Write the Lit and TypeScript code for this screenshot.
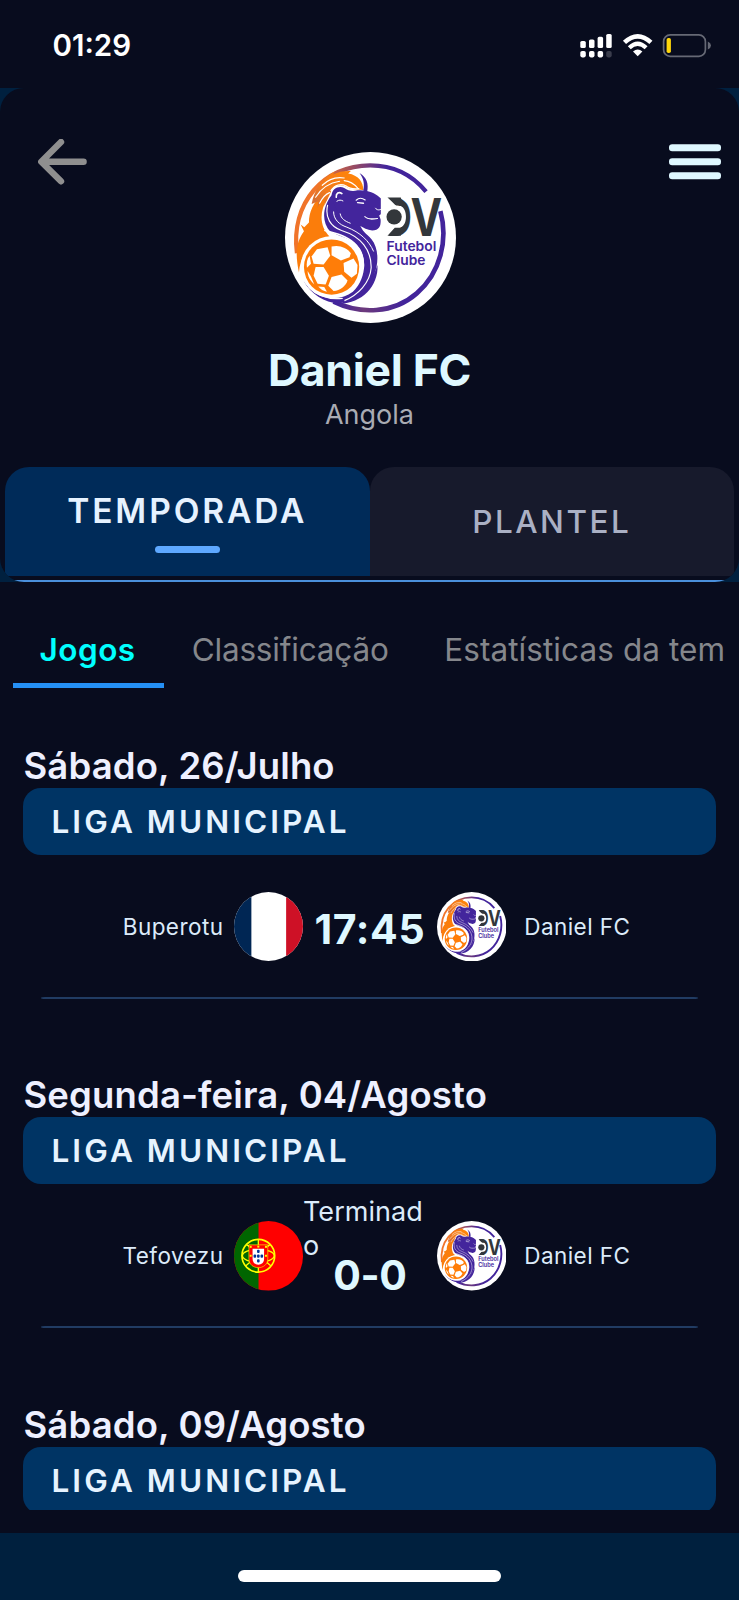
import { LitElement, html, svg, css, nothing } from "lit";
import { customElement, property } from "lit/decorators.js";

type Side = { name: string; crest: "fr" | "pt" | "club" };
type Match = { date: string; league: string; home?: Side; away?: Side; status?: string; score?: string };

const MATCHES: Match[] = [
  {
    date: "Sábado, 26/Julho",
    league: "LIGA MUNICIPAL",
    home: { name: "Buperotu", crest: "fr" },
    away: { name: "Daniel FC", crest: "club" },
    score: "17:45",
  },
  {
    date: "Segunda-feira, 04/Agosto",
    league: "LIGA MUNICIPAL",
    home: { name: "Tefovezu", crest: "pt" },
    away: { name: "Daniel FC", crest: "club" },
    status: "Terminado",
    score: "0-0",
  },
  { date: "Sábado, 09/Agosto", league: "LIGA MUNICIPAL" },
];

@customElement("club-crest")
class ClubCrest extends LitElement {
  static styles = css`
    :host { display: block; }
    svg { display: block; width: 100%; height: 100%; }
    .mark { font: 700 158px Inter, sans-serif; fill: #33373b; }
    .club { font: 600 41px Inter, sans-serif; fill: #43259c; }
  `;
  render() {
    return html`<svg viewBox="44 36 514 514">
      <defs>
        <linearGradient id="ring" gradientUnits="userSpaceOnUse" x1="150" y1="0" x2="350" y2="0">
          <stop offset="0" stop-color="#f0742a" /><stop offset="1" stop-color="#42249b" />
        </linearGradient>
        <linearGradient id="sweep" gradientUnits="userSpaceOnUse" x1="200" y1="0" x2="400" y2="0">
          <stop offset="0" stop-color="#42249b" /><stop offset=".4" stop-color="#6d3a7c" /><stop offset="1" stop-color="#42249b" />
        </linearGradient>
        <linearGradient id="mane" gradientUnits="userSpaceOnUse" x1="120" y1="200" x2="250" y2="100">
          <stop offset="0" stop-color="#c96a3e" /><stop offset=".4" stop-color="#f27a1c" /><stop offset="1" stop-color="#ff8408" />
        </linearGradient>
      </defs>
      <circle cx="301" cy="293" r="257" fill="#fff" />
      <path d="M80 340C60 190 160 76 300 76c70 0 126 28 168 79" fill="none" stroke="url(#ring)" stroke-width="13" />
      <path d="M511 214C535 300 511 400 440 461 370 522 270 525 190 486" fill="none" stroke="url(#sweep)" stroke-width="14" />
      <!-- flank and tail -->
      <path d="M160 160C128 186 116 218 116 248L102 262 91 254 101 274C74 310 76 350 86 398 90 340 128 300 178 290 148 262 146 214 172 176Z" fill="#fb7d0b" />
      <!-- mane -->
      <path d="M124 192C132 150 154 116 194 94L188 104C206 94 224 92 242 93L234 101C264 106 280 126 279 151 262 148 244 150 232 143 216 132 196 134 184 148 182 160 174 172 162 198L164 174C152 182 144 196 142 206L144 184Z" fill="url(#mane)" />
      <g fill="none" stroke="#fff" stroke-width="3.5" stroke-linecap="round">
        <path d="M136 172C154 144 180 128 208 124" /><path d="M156 136C174 118 198 110 222 114" />
        <path d="M222 122C240 124 252 132 262 144" /><path d="M148 190C158 170 168 162 178 158" />
        <path d="M182 152C194 134 212 130 228 138 240 148 252 148 266 146" />
      </g>
      <path d="M268 99C290 112 296 132 291 156L279 152C284 132 280 114 268 99Z" fill="#43259c" />
      <!-- neck and sweep -->
      <path d="M184 166C158 200 152 244 180 276 214 292 246 296 266 324 292 360 286 420 248 456 204 490 138 478 100 424 124 466 170 494 212 490 254 478 296 446 312 404 326 372 326 324 304 298 290 282 274 274 268 250Z" fill="#43259c" />
      <!-- head -->
      <path d="M184 168C184 146 206 136 222 144 234 152 246 156 262 151 290 149 314 158 328 172 338 180 348 184 349 194 350 202 344 212 340 217L327 227 332 240C333 260 326 272 306 272 292 270 280 264 266 256 240 268 200 230 184 168Z" fill="#43259c" />
      <path d="M322 376C326 440 272 494 206 492 262 474 304 434 322 376Z" fill="#43259c" />
      <g fill="none" stroke="#fff" stroke-linecap="round">
        <path d="M172 196C164 232 180 260 214 272 272 290 304 330 303 384 300 430 262 466 224 482" stroke-width="3.5" />
        <path d="M190 216C190 238 206 254 230 262 270 278 296 302 310 334" stroke-width="3" />
        <path d="M210 222C212 236 224 244 240 250" stroke-width="3" />
        <path d="M164 272C196 280 228 288 252 310 274 330 282 356 279 386" stroke-width="5" />
        <path d="M116 442C144 470 180 480 216 476" stroke-width="4" />
        <path d="M198 172C197 160 206 154 215 161" stroke-width="5" />
        <path d="M200 184C207 179 212 180 218 183" stroke-width="3" />
        <path d="M258 181C266 173 276 174 285 180" stroke-width="3.5" />
        <path d="M262 188 280 190" stroke-width="4" />
        <path d="M316 205C321 212 328 211 335 207" stroke-width="3" />
        <path d="M284 230C294 240 308 238 322 236" stroke-width="3.5" />
      </g>
      <!-- ball -->
      <circle cx="184" cy="382" r="93" fill="#fff" />
      <circle cx="184" cy="382" r="83" fill="#ff7d08" />
      <g fill="#fff">
        <path d="M140 328 172 322 180 348 160 374 130 372 124 350Z" />
        <path d="M184 320C208 314 230 324 242 340L238 352 212 362 184 346Z" />
        <path d="M250 356 262 376 260 402 244 414 222 396 220 370Z" />
        <path d="M136 382 160 382 176 408 166 434 142 432 130 408Z" />
        <path d="M184 412 214 404 232 422C226 440 210 452 190 454L174 438Z" />
        <path d="M118 348 122 372 110 384C108 370 110 358 118 348Z" />
        <path d="M112 394 122 410 132 434C120 424 112 410 112 394Z" />
        <path d="M144 440 162 442 170 456C160 454 150 448 144 440Z" />
      </g>
      <text class="mark" x="334" y="288" textLength="182" lengthAdjust="spacingAndGlyphs">DV</text>
      <path d="M332 168H352L378 198H392C412 206 414 254 392 262H376L352 294H332Z" fill="#fff" />
      <path d="M352 173H392L400 197H378ZM352 288H392L400 264H374Z" fill="#33373b" />
      <circle cx="372" cy="231" r="30" fill="#fff" />
      <circle cx="372" cy="231" r="23" fill="#33373b" />
      <text class="club" x="349" y="335" textLength="150" lengthAdjust="spacingAndGlyphs">Futebol</text>
      <text class="club" x="349" y="375" textLength="117" lengthAdjust="spacingAndGlyphs">Clube</text>
    </svg>`;
  }
}

@customElement("round-flag")
class RoundFlag extends LitElement {
  @property() code = "fr";
  static styles = css`
    :host { display: block; border-radius: 50%; overflow: hidden; }
    svg { display: block; width: 100%; height: 100%; }
  `;
  render() {
    const france = svg`
      <rect width="70" height="70" fill="#fff" /><rect width="17.5" height="70" fill="#002654" />
      <rect x="52.5" width="17.5" height="70" fill="#ce1126" />`;
    const portugal = svg`
      <rect width="70" height="70" fill="#f00" /><rect width="24.7" height="70" fill="#060" />
      <g fill="none" stroke="#ff0" stroke-width="1.7">
        <circle cx="24.5" cy="35" r="16.5" />
        <ellipse cx="24.5" cy="35" rx="16" ry="6.5" stroke-width="1.3" />
        <path d="M24.5 18.7V51.3M13 24 37 45M36 24 12 45M12.6 24Q24.5 30 36.4 24" stroke-width="1.3" />
      </g>
      <path d="M15 24H34V38C34 50 15 50 15 38Z" fill="#f00" stroke="#ff0" stroke-width=".6" />
      <path d="M18.7 28H30.3V38C30.3 46 18.7 46 18.7 38Z" fill="#fff" />
      <g fill="#039">
        <rect x="23.2" y="29" width="2.6" height="3.3" rx="1" /><rect x="23.2" y="33.7" width="2.6" height="3.3" rx="1" />
        <rect x="23.2" y="38.4" width="2.6" height="3.3" rx="1" /><rect x="19.7" y="33.7" width="2.6" height="3.3" rx="1" />
        <rect x="26.7" y="33.7" width="2.6" height="3.3" rx="1" />
      </g>
      <g fill="#ff0"><rect x="15.8" y="25" width="2" height="2" /><rect x="23.5" y="24.8" width="2" height="2" />
        <rect x="31.2" y="25" width="2" height="2" /><rect x="15.8" y="34" width="2" height="2" /><rect x="31.2" y="34" width="2" height="2" /></g>`;
    return html`<svg viewBox="0 0 70 70">${this.code === "fr" ? france : portugal}</svg>`;
  }
}

@customElement("match-section")
class MatchSection extends LitElement {
  @property({ attribute: false }) match!: Match;
  static styles = css`
    :host { display: block; height: 329.35px; flex: none; }
    .date { padding-left: 23.5px; font-size: 36.5px; font-weight: 600; line-height: 45px; height: 44px; color: #eef0ff; letter-spacing: 0.13px; white-space: nowrap; }
    .league { margin: 0 23.5px 0 23px; height: 67px; line-height: 67.5px; border-radius: 18px; background: #003464; color: #e6f3ff;
      font-size: 31.5px; font-weight: 600; letter-spacing: 3.05px; padding-left: 28.5px; }
    .row { display: grid; grid-template-columns: 233.5px 69.5px 133.7px 69.5px 1fr; height: 142px; align-items: center; color: #dcebfa; }
    .side { font-size: 22.5px; letter-spacing: 0.45px; }
    .home { text-align: right; padding-right: 10px; }
    .away { padding-left: 18px; }
    .crest { width: 69.5px; height: 69.5px; margin-top: 1.4px; }
    .mid { align-self: start; padding-top: 49px; text-align: center; }
    .mid.ended { padding-top: 10.8px; }
    .status { font-size: 27px; line-height: 33.4px; letter-spacing: 0.05px; text-align: left; word-break: break-all; width: 122px; }
    .score { font-size: 41px; line-height: 50px; font-weight: 700; color: #dff8ff; letter-spacing: 0.6px; }
    .ended .score { line-height: 26px; letter-spacing: -0.4px; }
    .rule { height: 2px; margin: 0 41px; border-radius: 4px / 1px; background: #213c63; }
  `;
  private crest(side: Side) {
    return side.crest === "club"
      ? html`<club-crest class="crest"></club-crest>`
      : html`<round-flag class="crest" code=${side.crest}></round-flag>`;
  }
  render() {
    const m = this.match;
    return html`
      <div class="date">${m.date}</div>
      <div class="league">${m.league}</div>
      ${m.home && m.away
        ? html`<div class="row">
              <div class="side home">${m.home.name}</div>
              ${this.crest(m.home)}
              <div class="mid ${m.status ? "ended" : ""}">
                ${m.status ? html`<div class="status">${m.status}</div>` : nothing}
                <div class="score">${m.score}</div>
              </div>
              ${this.crest(m.away)}
              <div class="side away">${m.away.name}</div>
            </div>
            <div class="rule"></div>`
        : nothing}
    `;
  }
}

@customElement("app-root")
class AppRoot extends LitElement {
  static styles = css`
    :host { display: flex; flex-direction: column; width: 739px; height: 1600px; overflow: hidden; background: #080c1e;
      font-family: Inter, sans-serif; }
    .status { height: 88px; flex: none; box-sizing: border-box; display: flex; justify-content: space-between; padding: 0 27px 0 52.5px; color: #fff; }
    .clock { font-size: 29.5px; font-weight: 600; line-height: 91px; }
    .icons { width: 132px; height: 26px; margin-top: 33px; }
    .backdrop { background: #00203f; flex: none; }
    .header { box-sizing: border-box; height: 493.5px; padding-top: 51px; background: #080c1e; border-radius: 24px;
      overflow: hidden; display: flex; flex-direction: column; align-items: center; }
    .top { align-self: stretch; display: grid; grid-template-columns: 1fr 171px 1fr; padding-left: 1px; }
    .back { width: 50px; height: 46px; margin-left: 37px; }
    .burger { width: 52px; height: 36px; justify-self: end; margin: 5px 18px 0 0; }
    .logo { width: 171px; height: 171px; margin-top: 13.4px; }
    .name { margin-top: 20px; font-size: 44.5px; line-height: 54px; font-weight: 700; letter-spacing: -0.3px; color: #dff8ff; }
    .country { margin-top: 1px; font-size: 27px; line-height: 33px; color: #a9abb3; }
    .tabs { align-self: stretch; display: flex; height: 109px; flex: none; margin: 35.5px 5px 0; }
    .edge { align-self: stretch; flex: none; height: 1.8px; margin-top: auto; background: #4a90dc; }
    .tab { flex: 1; border-radius: 24px 24px 0 0; display: flex; flex-direction: column; align-items: center; justify-content: center;
      background: #171a2c; color: #aab0c4; font-size: 31.5px; font-weight: 500; letter-spacing: 2.5px; }
    .tab.on { justify-content: flex-start; background: #002b59; color: #e6f2ff; font-size: 33.5px; font-weight: 600; letter-spacing: 2.9px; }
    .tab.on .label { line-height: 40px; margin-top: 24.5px; }
    .bar { width: 65px; height: 7px; border-radius: 4px; background: #5ea8ff; margin-top: 14.5px; }
    .subtabs { flex: none; display: flex; box-sizing: border-box; height: 106px; padding-top: 35px; margin: 0 12px 0 12.5px; overflow: hidden; white-space: nowrap; }
    .sub { flex: none; box-sizing: border-box; padding: 0 27.5px 0 28px; font-size: 31.5px; line-height: 66px; color: #85878c; letter-spacing: -0.18px; border-bottom: 5px solid transparent; }
    .sub.on { color: #00ffff; font-weight: 600; letter-spacing: 0.5px; padding: 0 28px 0 27px; border-bottom-color: #2590f5; }
    .sub:last-child { letter-spacing: 0.08px; }
    .list { height: 766px; margin-top: 56.5px; flex: none; overflow: hidden; display: flex; flex-direction: column; }
    .foot { margin-top: 22.5px; flex: 1; background: #00203e; display: flex; justify-content: center; align-items: flex-start; }
    .home { width: 263px; height: 12px; border-radius: 6px; background: #fff; margin-top: 37px; }
  `;
  render() {
    return html`
      <div class="status">
        <div class="clock">01:29</div>
        <svg class="icons" viewBox="580 33 132 26">
          <g fill="#fff">
            <rect x="580.3" y="41" width="5.5" height="7" rx="1.6" /><rect x="589" y="39.5" width="5.5" height="8.5" rx="1.6" />
            <rect x="597.6" y="36.8" width="5.5" height="11.2" rx="1.6" /><rect x="606.2" y="34" width="5.5" height="14" rx="1.6" />
            <rect x="580.3" y="51" width="5.5" height="6.4" rx="1.8" /><rect x="589" y="51" width="5.5" height="6.4" rx="1.8" />
            <rect x="597.6" y="51" width="5.5" height="6.4" rx="1.8" />
            <rect x="606.2" y="51" width="5.5" height="6.4" rx="1.8" fill="#3a3d4c" />
            <path d="M637.7 56.2 633 51.4Q637.7 47.6 642.4 51.4Z" />
          </g>
          <path d="M624.5 42.4Q637.7 30.2 650.9 42.4" fill="none" stroke="#fff" stroke-width="4.6" />
          <path d="M629.3 47.8Q637.7 39.8 646.1 47.8" fill="none" stroke="#fff" stroke-width="4.2" />
          <rect x="663.6" y="34.9" width="41.8" height="21.4" rx="6.5" fill="none" stroke="#666975" stroke-width="1.7" />
          <rect x="666.6" y="38" width="4.3" height="15" rx="1.8" fill="#ffd60a" />
          <path d="M707.8 41.5Q711 43 711 45.5T707.8 49.5Z" fill="#666975" />
        </svg>
      </div>
      <div class="backdrop">
        <div class="header">
          <div class="top">
            <svg class="back" viewBox="38 139 50 46"><path d="M61 142 41.3 161.8 61 181.3M42 161.8H83.6" fill="none" stroke="#8f8f8f" stroke-width="6.4" stroke-linecap="round" stroke-linejoin="round" /></svg>
            <club-crest class="logo"></club-crest>
            <svg class="burger" viewBox="0 0 52 36" fill="#dff8ff"><rect y=".3" width="52" height="7" rx="3.2" /><rect y="14.3" width="52" height="7" rx="3.2" /><rect y="28.2" width="52" height="7" rx="3.2" /></svg>
          </div>
          <div class="name">Daniel FC</div>
          <div class="country">Angola</div>
          <div class="tabs">
            <div class="tab on"><span class="label">TEMPORADA</span><span class="bar"></span></div>
            <div class="tab">PLANTEL</div>
          </div>
          <div class="edge"></div>
        </div>
      </div>
      <div class="subtabs">
        <div class="sub on">Jogos</div>
        <div class="sub">Classificação</div>
        <div class="sub">Estatísticas da tem</div>
      </div>
      <div class="list">${MATCHES.map((m) => html`<match-section .match=${m}></match-section>`)}</div>
      <div class="foot"><div class="home"></div></div>
    `;
  }
}
